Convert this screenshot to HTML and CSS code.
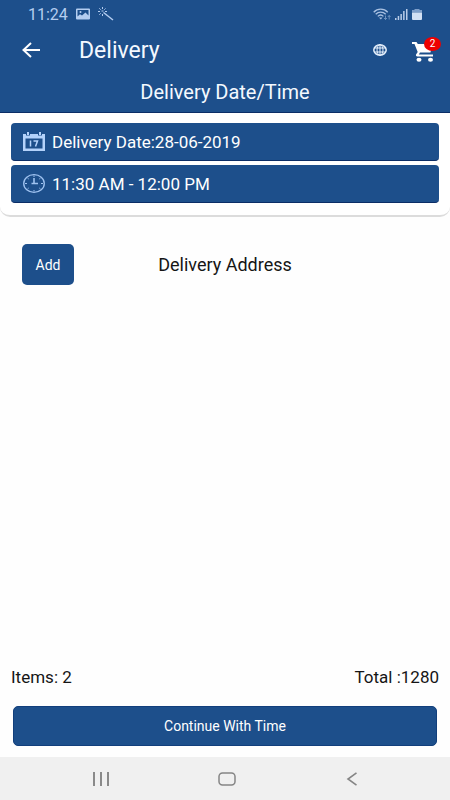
FILE: index.html
```html
<!DOCTYPE html>
<html lang="en">
<head>
  <meta charset="UTF-8" />
  <meta name="viewport" content="width=device-width, initial-scale=1.0"/>
  <title>Delivery</title>
  <link rel="stylesheet" href="styles.css">
</head>
<body>
  <header>
    <div class="status-bar">
      <span class="clock">11:24</span>
      <svg width="14" height="12" viewBox="0 0 14 12" fill="#b4cdf0">
        <path fill-rule="evenodd" d="M1 0.500h12a1 1 0 0 1 1 1v9a1 1 0 0 1-1 1H1a1 1 0 0 1-1-1v-9a1 1 0 0 1 1-1zM1.500 2v6.500L4 6.200l2 1.300 3.500-3 3 3V2z"/>
        <circle cx="4.500" cy="4" r="1"/>
      </svg>
      <svg width="16" height="14" viewBox="0 0 16 14" fill="none" stroke="#b4cdf0">
        <path d="M5.500 5.500L15 13" stroke-width="1.500"/>
        <path d="M4.500 0v2M4.500 7v2M0 4.500h2M7 4.500h2M1.300 1.300l1.400 1.400M7.500 1.500L6.300 2.700M1.300 7.700l1.400-1.400M3.500 4h2"/>
      </svg>
      <div class="status-right">
        <svg width="18" height="13" viewBox="0 0 18 13" fill="none" stroke="#a9c1e2" stroke-width="1.300">
          <path d="M0.700 4.200C4.500 0.200 11 0.200 14.700 4.200M2.700 6.300c2.800-2.800 7.200-2.800 10 0M4.800 8.400c1.700-1.600 4-1.600 5.600 0"/>
          <path d="M6 9.500h3.500l-1.700 2z" fill="#a9c1e2" stroke="none"/>
          <path d="M12.500 7.500v4M11 10l1.500 1.500L14 10M16.200 11.500v-4M14.800 9l1.400-1.500L17.500 9" stroke="#7e9fca" stroke-width="0.800"/>
        </svg>
        <svg width="13" height="12" viewBox="0 0 13 12" fill="#b9cce8">
          <path d="M0 10h1.500v2H0zM2.700 8h1.500v4H2.700zM5.400 6h1.500v6H5.400zM8.100 3h1.500v9H8.100zM11 1h1.500v11H11z"/>
        </svg>
        <svg width="10" height="12" viewBox="0 0 10 12">
          <path d="M2.500 1h5v1H10v2.500H0V2h2.500z" fill="#7e9fca"/>
          <path d="M0 4.500h10V11a1 1 0 0 1-1 1H1a1 1 0 0 1-1-1z" fill="#d2e0f3"/>
        </svg>
      </div>
    </div>

    <div class="toolbar">
      <button type="button" class="icon-btn" aria-label="Back">
        <svg width="18" height="16" viewBox="0 0 18 16" fill="none" stroke="#fff" stroke-width="2">
          <path d="M18 8H1.500M9 1L1.500 8L9 15"/>
        </svg>
      </button>
      <h1>Delivery</h1>
      <button type="button" class="icon-btn language" aria-label="Language">
        <svg width="14" height="12" viewBox="0 0 14 12" fill="none" stroke="#e6f0fc">
          <ellipse cx="7" cy="6" rx="6.200" ry="5.200" stroke-width="1.500"/>
          <ellipse cx="7" cy="6" rx="3" ry="5.300"/>
          <path d="M7 0.500v11M1 4h12M1 8h12"/>
        </svg>
      </button>
      <button type="button" class="icon-btn cart" aria-label="Cart">
        <svg width="24" height="22" viewBox="0 0 24 22" fill="#fff">
          <path d="M0 1h4.500l1.300 2H20l-1.500 8.500H8L6.800 13.500H21v2H5.500c-1.400 0-2-1.200-1.300-2.300l1.500-2.300L2.500 3H0z"/>
          <ellipse cx="7" cy="18.800" rx="2.500" ry="2"/>
          <ellipse cx="18.500" cy="18.800" rx="2.500" ry="2"/>
        </svg>
        <span class="badge">2</span>
      </button>
    </div>
    <h2>Delivery Date/Time</h2>
  </header>

  <section class="schedule">
    <button type="button" class="slot">
      <svg width="22" height="19" viewBox="0 0 22 19" fill="#b4d2fa">
        <path fill-rule="evenodd" d="M0 2h3v1.500h4V2h8v1.500h4V2h3v17H0zM2.500 6.500v10h17v-10z"/>
        <path d="M4 0h2v3H4zM16 0h2v3h-2z"/>
        <path d="M7.500 8.500v6M10.500 9h4l-2 5.500" fill="none" stroke="#b4d2fa" stroke-width="1.500"/>
      </svg>
      Delivery Date:28-06-2019
    </button>
    <button type="button" class="slot">
      <svg width="22" height="19" viewBox="0 0 22 19" fill="none" stroke="#9fc2f0">
        <ellipse cx="11" cy="9.500" rx="10.300" ry="8.800" stroke-width="1.300"/>
        <path d="M11 4v6M8.500 9.500H15" stroke-width="1.600"/>
        <path d="M11 1.500v1.500M11 16v1.500M2 9.500h2M18 9.500h2M4.500 4l1.200 1M17.500 4l-1.200 1M4.500 15l1.200-1M17.500 15l-1.200-1"/>
      </svg>
      11:30 AM - 12:00 PM
    </button>
  </section>

  <main>
    <div class="address">
      <button type="button" class="add-btn">Add</button>
      <h3>Delivery Address</h3>
    </div>
  </main>

  <div class="summary">
    <span>Items: 2</span>
    <span>Total :1280</span>
  </div>
  <button type="button" class="continue-btn">Continue With Time</button>

  <nav>
    <button type="button" class="icon-btn" aria-label="Recent apps">
      <svg width="18" height="14" viewBox="0 0 18 14" fill="#8a8a8a">
        <path d="M1 0h2v14H1zM8 0h2v14H8zM15 0h2v14h-2z"/>
      </svg>
    </button>
    <button type="button" class="icon-btn" aria-label="Home">
      <svg width="18" height="14" viewBox="0 0 18 14" fill="none" stroke="#858585" stroke-width="1.500">
        <rect x="1" y="1" width="16" height="12" rx="3.500"/>
      </svg>
    </button>
    <button type="button" class="icon-btn" aria-label="Back">
      <svg width="18" height="14" viewBox="0 0 18 14" fill="none" stroke="#858585" stroke-width="1.600">
        <path d="M13.500 0.800L5 7L13.500 13.200"/>
      </svg>
    </button>
  </nav>
</body>
</html>
```
FILE: styles.css
```css
* {
  box-sizing: border-box;
}
body {
  font-family: Roboto, "Liberation Sans", sans-serif;
  background-color: #fefefe;
  color: #151515;
  margin: 0;
  display: flex;
  flex-direction: column;
  min-height: 100vh;
}
h1, h2, h3 {
  margin: 0;
  font-weight: 400;
}
button {
  font-family: inherit;
  border: none;
  padding: 0;
  color: #fff;
  background-color: #1d4f8b;
  cursor: pointer;
}
svg {
  display: block;
  flex: none;
}
header {
  background-color: #1d4f8b;
  color: #f4f9ff;
  border-bottom: 1px solid #0b2d66;
}
.status-bar {
  display: flex;
  align-items: center;
  gap: 8px;
  height: 28px;
  padding: 0 28px;
}
.clock {
  font-size: 16px;
  color: #b4cdf0;
}
.status-right {
  display: flex;
  align-items: center;
  gap: 4px;
  margin-left: auto;
}
.toolbar {
  display: flex;
  align-items: center;
  height: 44px;
  padding: 0 14px 0 22px;
}
.icon-btn {
  background: none;
}
h1 {
  font-size: 23px;
  margin-left: 39px;
}
.language {
  margin-left: auto;
}
.cart {
  position: relative;
  margin-left: 25px;
}
.badge {
  position: absolute;
  top: 0;
  right: -5px;
  width: 17px;
  height: 14px;
  border-radius: 50%;
  background-color: #ee0000;
  font-size: 10px;
  line-height: 14px;
}
.cart svg {
  margin-top: 4px;
}
h2 {
  font-size: 20px;
  line-height: 40px;
  text-align: center;
}
.schedule {
  display: flex;
  flex-direction: column;
  gap: 4px;
  padding: 10px 11px 12px;
  background-color: #fff;
  border-bottom: 2px solid #dcdcdc;
  border-radius: 0 0 10px 10px;
}
.slot {
  display: flex;
  align-items: center;
  gap: 7px;
  height: 38px;
  padding: 0 12px;
  border-radius: 4px;
  font-size: 17px;
  border-bottom: 1px solid #0b2d66;
}
main {
  flex: 1;
  padding: 27px 22px;
}
.address {
  display: grid;
  grid-template-columns: 52px 1fr 52px;
  align-items: center;
}
.add-btn {
  height: 41px;
  border-radius: 5px;
  font-size: 14px;
}
h3 {
  font-size: 18px;
  text-align: center;
}
.summary {
  display: flex;
  justify-content: space-between;
  padding: 0 11px;
  font-size: 17px;
  line-height: 20px;
}
.continue-btn {
  height: 40px;
  margin: 19px 13px 11px;
  border-radius: 5px;
  font-size: 14px;
  border: 1px solid #123f7c;
}
nav {
  display: flex;
  justify-content: space-between;
  align-items: center;
  height: 43px;
  padding: 0 89px 0 92px;
  background-color: #f0f0f0;
}
```
